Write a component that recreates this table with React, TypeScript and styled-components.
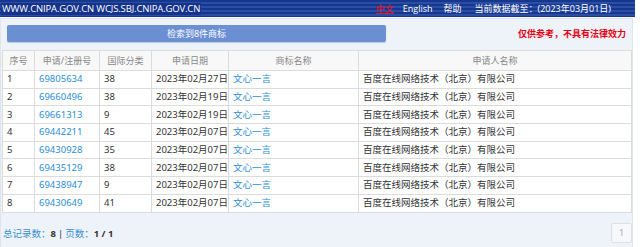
import React from "react"
import styled, { createGlobalStyle } from "styled-components"

const GlobalStyle = createGlobalStyle`
  html, body {
    margin: 0;
    padding: 0;
    background: #ffffff;
    font-family: "Noto Sans", "Noto Sans CJK SC", sans-serif;
    font-size: 9px;
    color: #333;
  }
`

const records = [
  { id: 1, no: "69805634", cls: "38", date: "2023年02月27日" },
  { id: 2, no: "69660496", cls: "38", date: "2023年02月19日" },
  { id: 3, no: "69661313", cls: "9", date: "2023年02月19日" },
  { id: 4, no: "69442211", cls: "45", date: "2023年02月07日" },
  { id: 5, no: "69430928", cls: "35", date: "2023年02月07日" },
  { id: 6, no: "69435129", cls: "38", date: "2023年02月07日" },
  { id: 7, no: "69438947", cls: "9", date: "2023年02月07日" },
  { id: 8, no: "69430649", cls: "41", date: "2023年02月07日" },
]

export default function App() {
  return (
    <>
      <GlobalStyle />
      <TopBar>
        <Site>WWW.CNIPA.GOV.CN WCJS.SBJ.CNIPA.GOV.CN</Site>
        <TopLinks>
          <TopLink $active $gap={0}>中文</TopLink>
          <TopLink $gap={9}>English</TopLink>
          <TopLink $gap={11}>帮助</TopLink>
          <TopLink $gap={13}>当前数据截至：(2023年03月01日)</TopLink>
        </TopLinks>
      </TopBar>
      <Panel>
        <Toolbar>
          <SearchButton>检索到8件商标</SearchButton>
          <Notice>仅供参考，不具有法律效力</Notice>
        </Toolbar>
        <Table>
          <colgroup>
            <col style={{ width: 32 }} />
            <col style={{ width: 65 }} />
            <col style={{ width: 52 }} />
            <col style={{ width: 77 }} />
            <col style={{ width: 130 }} />
            <col />
          </colgroup>
          <thead>
            <HeadRow>
              <Th>序号</Th>
              <Th>申请/注册号</Th>
              <Th>国际分类</Th>
              <Th>申请日期</Th>
              <Th>商标名称</Th>
              <Th>申请人名称</Th>
            </HeadRow>
          </thead>
          <tbody>
            {records.map((r) => (
              <Row key={r.id}>
                <Td>{r.id}</Td>
                <Td $link>{r.no}</Td>
                <Td>{r.cls}</Td>
                <Td>{r.date}</Td>
                <Td $link>文心一言</Td>
                <Td>百度在线网络技术（北京）有限公司</Td>
              </Row>
            ))}
          </tbody>
        </Table>
        <Footer>
          <Summary>
            <Label>总记录数：</Label>
            <Value>8</Value>
            <Sep>|</Sep>
            <Label>页数：</Label>
            <Value>1 / 1</Value>
          </Summary>
          <PageButton>1</PageButton>
        </Footer>
      </Panel>
    </>
  )
}

const TopBar = styled.div`
  width: 635px;
  height: 17px;
  display: flex;
  align-items: center;
  justify-content: space-between;
  background: repeating-linear-gradient(
    to bottom,
    #17378c 0px,
    #17378c 2px,
    #2a4ea6 2px,
    #2a4ea6 4px
  );
  color: #fff;
`

const Site = styled.span`
  margin-left: 1px;
  padding: 0 1px;
  line-height: 12px;
  background: #16338a;
  font-family: "Open Sans", sans-serif;
  font-size: 9.5px;
  letter-spacing: -0.15px;
`

const TopLinks = styled.div`
  display: flex;
  margin-right: 24px;
  font-family: "Open Sans", "Noto Sans CJK SC", sans-serif;
  font-size: 9px;
`

const TopLink = styled.span<{ $active?: boolean; $gap: number }>`
  margin-left: ${(p) => p.$gap}px;
  color: ${(p) => (p.$active ? "#e8142b" : "#fff")};
  text-decoration: ${(p) => (p.$active ? "underline" : "none")};
`

const Panel = styled.div`
  width: 633px;
  height: 229px;
  margin-top: 1px;
  box-sizing: border-box;
  border: 1px solid #dfe5ec;
  border-bottom: none;
  background: #eef3f9;
  display: flex;
  flex-direction: column;
`

const Toolbar = styled.div`
  display: flex;
  align-items: center;
  justify-content: space-between;
  padding: 6px 6px 0 6px;
  height: 17px;
`

const SearchButton = styled.div`
  width: 379px;
  height: 17px;
  line-height: 17px;
  text-align: center;
  background: #6b8fd3;
  color: #fff;
  border-radius: 2px;
  font-size: 9px;
  box-shadow: 0 1px 1px rgba(60, 80, 130, 0.25);
`

const Notice = styled.span`
  color: #e60012;
  font-weight: bold;
  font-size: 9px;
`

const Table = styled.table`
  margin: 8px 0 0 1px;
  width: 630px;
  border-collapse: collapse;
  table-layout: fixed;
  background: #fff;
`

const HeadRow = styled.tr`
  height: 20px;
`

const Row = styled.tr`
  height: 17.7px;
`

const Th = styled.th`
  padding: 0;
  border: 1px solid #dcdcdc;
  background: #f8f8f8;
  color: #888;
  font-weight: normal;
  font-size: 9px;
  text-align: center;
`

const Td = styled.td<{ $link?: boolean }>`
  padding: 0 0 0 4px;
  border: 1px solid #dcdcdc;
  color: ${(p) => (p.$link ? "#2b8ed6" : "#333")};
  font-size: 9.5px;
  line-height: 12px;
  white-space: nowrap;
  overflow: hidden;
`

const Footer = styled.div`
  flex: 1;
  display: flex;
  align-items: center;
  justify-content: space-between;
  padding: 7px 0 0 2px;
`

const Summary = styled.div`
  display: flex;
  align-items: center;
  font-size: 9.5px;
`

const Label = styled.span`
  color: #3a8fcf;
`

const Value = styled.span`
  color: #333;
  font-weight: bold;
`

const Sep = styled.span`
  color: #333;
  margin: 0 2px;
`

const PageButton = styled.div`
  width: 19px;
  height: 18px;
  line-height: 18px;
  text-align: center;
  border: 1px solid #e0e0e0;
  background: #f6f8fb;
  color: #aaa;
  font-size: 9px;
  border-radius: 2px;
`
